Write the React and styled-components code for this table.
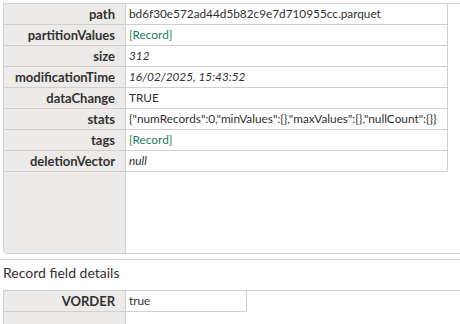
import React from 'react';
import styled, { createGlobalStyle } from 'styled-components';

const GlobalStyle = createGlobalStyle`
  html, body {
    margin: 0;
    background: #ffffff;
    overflow: hidden;
  }
  body {
    font-family: Lato, "Noto Sans", "Liberation Sans", sans-serif;
    color: #323130;
  }
`;

const Page = styled.div`
  width: 460px;
  height: 324px;
  overflow: hidden;
  display: flex;
  flex-direction: column;
`;

const Panel = styled.div`
  margin: 3px 0 0 3px;
  width: 520px;
  height: ${({ height }) => height}px;
  box-sizing: border-box;
  border: 1px solid #d2d0ce;
  border-right: none;
  border-bottom: ${({ open }) => (open ? 'none' : '1px solid #d2d0ce')};
  border-radius: 0 0 0 4px;
  display: flex;
  flex-shrink: 0;
  overflow: hidden;
`;

const KeyColumn = styled.div`
  width: 121px;
  flex-shrink: 0;
  background: #edebe9;
  border-right: 1px solid #d2d0ce;
  display: flex;
  flex-direction: column;
`;

const ValueColumn = styled.div`
  display: flex;
  flex-direction: column;
`;

const KeyCell = styled.div`
  height: 20px;
  border-bottom: 1px solid #d2d0ce;
  box-sizing: content-box;
  padding-right: 10px;
  text-align: right;
  font-weight: 700;
  font-size: 13px;
  line-height: 20px;
  white-space: nowrap;
  color: #323130;
`;

const ValueCell = styled.div`
  width: ${({ width }) => width}px;
  height: 20px;
  box-sizing: content-box;
  border-bottom: 1px solid #d2d0ce;
  border-right: 1px solid #d2d0ce;
  padding-left: 3px;
  font-size: 11.8px;
  line-height: 20px;
  white-space: nowrap;
  overflow: hidden;
  color: ${({ kind }) => (kind === 'link' ? '#1b7f62' : '#323130')};
  font-style: ${({ kind }) => (kind === 'italic' ? 'italic' : 'normal')};
`;

const Separator = styled.div`
  height: 1px;
  background: #d2d0ce;
  margin-top: 5px;
  flex-shrink: 0;
`;

const Heading = styled.div`
  margin: 3px 0 4px 3px;
  font-size: 14px;
  line-height: 20px;
  color: #323130;
  flex-shrink: 0;
`;

const rows = [
  ['path', 'bd6f30e572ad44d5b82c9e7d710955cc.parquet', 'text'],
  ['partitionValues', '[Record]', 'link'],
  ['size', '312', 'italic'],
  ['modificationTime', '16/02/2025, 15:43:52', 'italic'],
  ['dataChange', 'TRUE', 'text'],
  ['stats', '{"numRecords":0,"minValues":{},"maxValues":{},"nullCount":{}}', 'text'],
  ['tags', '[Record]', 'link'],
  ['deletionVector', 'null', 'italic'],
];

const fields = [['VORDER', 'true', 'text']];

const RecordTable = ({ data, valueWidth, height, open }) => (
  <Panel height={height} open={open}>
    <KeyColumn>
      {data.map(([k]) => (
        <KeyCell key={k}>{k}</KeyCell>
      ))}
    </KeyColumn>
    <ValueColumn>
      {data.map(([k, v, kind]) => (
        <ValueCell key={k} kind={kind} width={valueWidth}>
          {v}
        </ValueCell>
      ))}
    </ValueColumn>
  </Panel>
);

const App = () => (
  <Page>
    <GlobalStyle />
    <RecordTable data={rows} valueWidth={318} height={251} />
    <Separator />
    <Heading>Record field details</Heading>
    <RecordTable data={fields} valueWidth={117} height={60} open />
  </Page>
);

export default App;
